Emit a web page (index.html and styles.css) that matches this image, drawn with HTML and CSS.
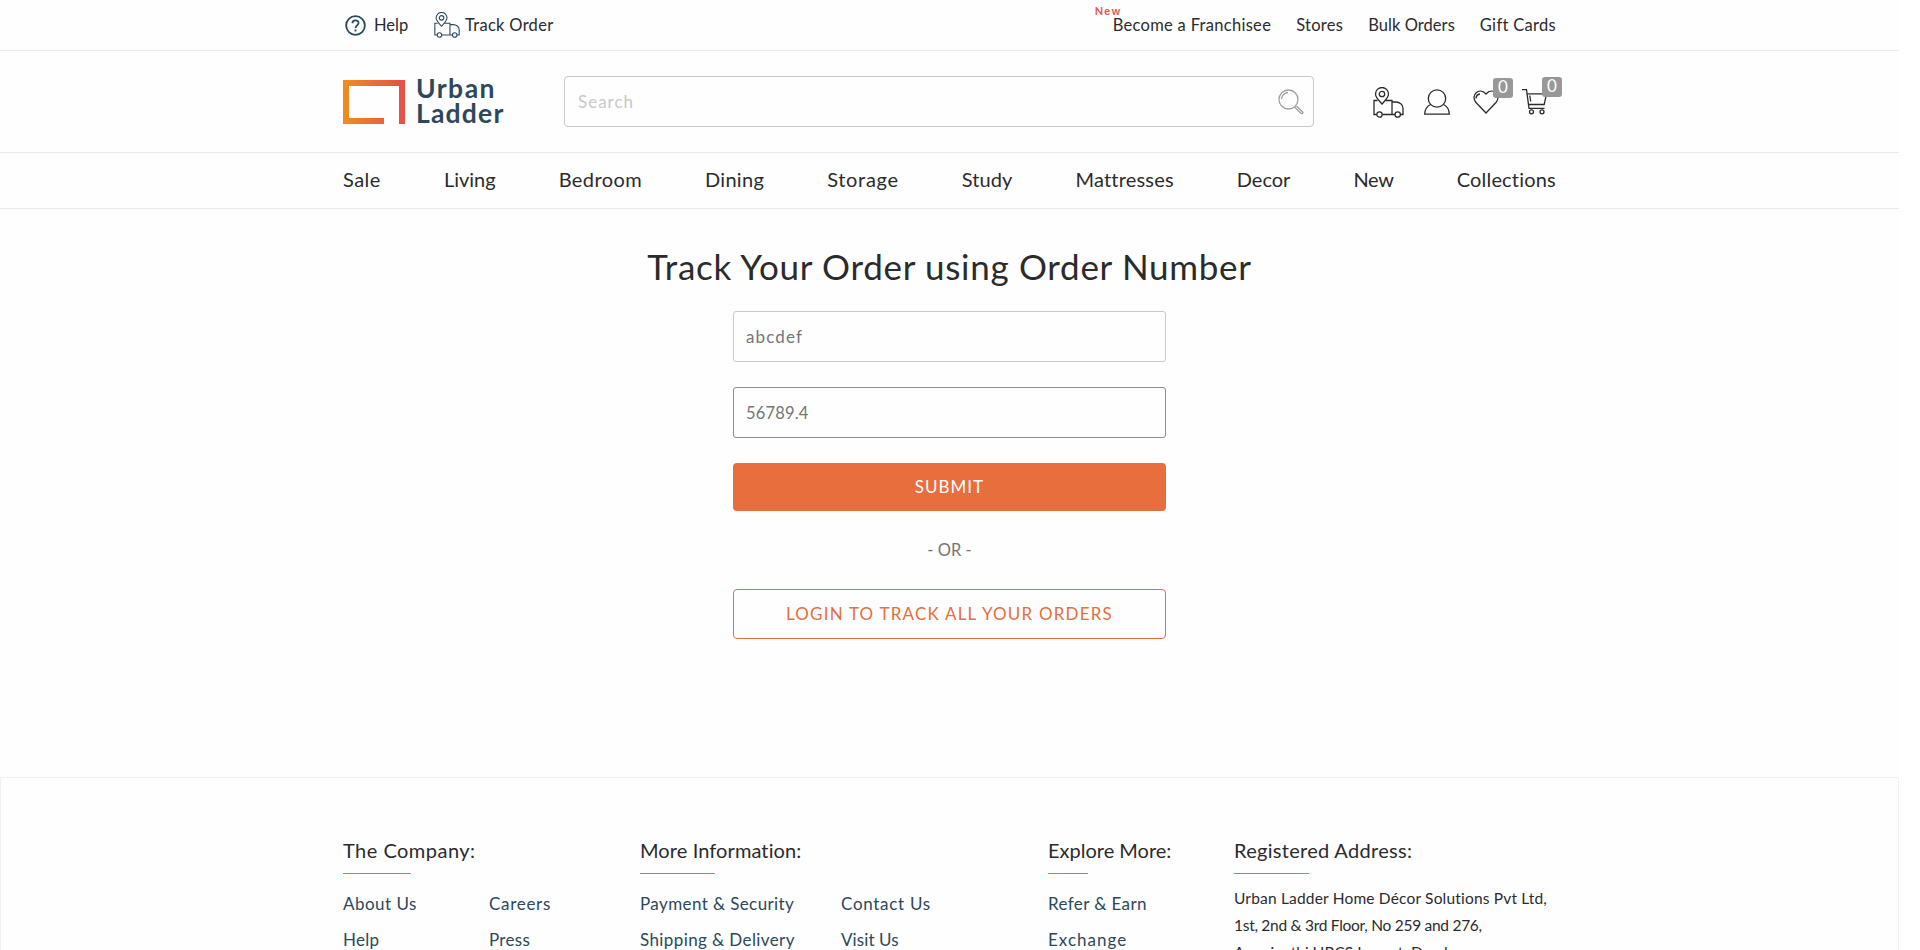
FILE: index.html
```html
<!DOCTYPE html>
<html lang="en">
<head>
<meta charset="utf-8">
<title>Track Order - Urban Ladder</title>
<link rel="stylesheet" href="styles.css">
</head>
<body>
<svg class="defs" width="0" height="0">
  <symbol id="truck" viewBox="0 0 31 31">
    <path d="M4.5 13.5H1V27.500H3.500M9.500 27.500H22M27.500 27.500H30V21C30 17.500 26.500 15 23 15H19M12.500 13.500H19V27.500"/>
    <path d="M9 17C6 13.500 2.500 10.500 2.500 7A6.500 6.500 0 0 1 15.500 7C15.500 10.500 12 13.500 9 17Z"/>
    <circle cx="9" cy="7" r="2.700"/><circle cx="6.500" cy="27.500" r="2.700"/><circle cx="24.700" cy="27.500" r="2.700"/>
  </symbol>
</svg>
<div class="page">
  <div class="topbar"><div class="wrap row">
    <a class="help"><svg class="q" viewBox="0 0 22 22"><circle cx="11" cy="11" r="9.800"/><path d="M7.800 8.700C7.800 4.700 14.200 4.700 14.200 8.500C14.200 11 11 10.800 11 13.500M11 15.300V17.200"/></svg><span>Help</span></a>
    <a class="track"><svg class="truck-s"><use href="#truck"/></svg><span class="s3">Track Order</span></a>
    <div class="links">
      <a class="fr"><span class="s3">Become a Franchisee</span><b class="new">New</b></a>
      <a class="s3">Stores</a><a class="s0">Bulk Orders</a><a class="s3">Gift Cards</a>
    </div>
  </div></div>
  <header class="head"><div class="wrap row">
    <div class="logo">
      <svg viewBox="0 0 62 44"><defs><linearGradient id="g" x1="0" x2="1"><stop offset=".08" stop-color="#ee8a1f"/><stop offset=".9" stop-color="#e85349"/></linearGradient></defs><path fill="url(#g)" d="M0 0H62V44H56V6H6V38H41V44H0Z"/></svg>
      <div class="name"><span class="urban">Urban</span><span class="ladder">Ladder</span></div>
    </div>
    <div class="search"><span>Search</span><svg viewBox="0 0 26 26"><circle cx="10.500" cy="10.500" r="9.500"/><path d="M3.500 10A7 7 0 0 1 10 3.500M16.500 18L23 24.500Q24.500 25 25 23.500L18.500 17"/></svg></div>
    <div class="icons">
      <svg class="i-truck"><use href="#truck"/></svg>
      <svg class="i-user" viewBox="0 0 26 26"><circle cx="13" cy="9.500" r="8.700"/><path d="M6.500 15.500C2.500 17.500 .8 21 .7 25.200H25.300C25.200 21 23.500 17.500 19.500 15.500"/></svg>
      <span class="ic"><svg class="i-heart" viewBox="0 0 26 24"><path d="M13 23L3 12.500C-3 5.500 6-3.500 13 4C20-3.500 29 5.500 23 12.500ZM3 8.500Q3.200 4.500 7 4"/></svg><i class="badge">0</i></span>
      <span class="ic"><svg class="i-cart" viewBox="0 0 26 26"><path d="M0 .7H4.500L7 19.300H22.500M5.300 4.800H24.500L22.200 15.500H6.500M7.800 6.500L8.700 12.500"/><circle cx="9.500" cy="22.800" r="2"/><circle cx="20" cy="22.800" r="2"/></svg><i class="badge">0</i></span>
    </div>
  </div></header>
  <nav class="nav"><div class="wrap row">
    <a class="s5">Sale</a><a>Living</a><a class="s4">Bedroom</a><a class="s3">Dining</a><a class="s7">Storage</a><a class="s1">Study</a><a class="s2">Mattresses</a><a>Decor</a><a class="tight">New</a><a class="s2">Collections</a>
  </div></nav>
  <main class="main">
    <h1>Track Your Order using Order Number</h1>
    <div class="form">
      <div class="field"><span class="wide">abcdef</span></div>
      <div class="field active"><span class="s2">56789.4</span></div>
      <div class="btn solid"><span>SUBMIT</span></div>
      <div class="or"><span>- OR -</span></div>
      <div class="btn line"><span class="login">LOGIN TO TRACK ALL YOUR ORDERS</span></div>
    </div>
  </main>
  <footer class="foot"><div class="wrap cols">
    <section><h2 class="s5">The Company:</h2><div class="rule r-a"></div><div class="lists a"><ul><li class="s5">About Us</li><li class="s3">Help</li></ul><ul><li class="s7">Careers</li><li class="s3">Press</li></ul></div></section>
    <section><h2 class="s1">More Information:</h2><div class="rule r-b"></div><div class="lists b"><ul><li class="s4">Payment &amp; Security</li><li class="s4">Shipping &amp; Delivery</li></ul><ul><li class="s7">Contact Us</li><li class="s1">Visit Us</li></ul></div></section>
    <section><h2>Explore More:</h2><div class="rule r-c"></div><div class="lists"><ul><li class="s4">Refer &amp; Earn</li><li class="s10">Exchange</li></ul></div></section>
    <section><h2 class="s3">Registered Address:</h2><div class="rule r-b"></div><div class="addr"><p class="s2">Urban Ladder Home Décor Solutions Pvt Ltd,</p><p class="tight">1st, 2nd &amp; 3rd Floor, No 259 and 276,</p><p>Amarjyothi HBCS Layout, Domlur,</p></div></section>
  </div></footer>
</div>
</body>
</html>
```
FILE: styles.css
```css
*{box-sizing:border-box}
html{height:100%;overflow:hidden}
body{margin:0;height:950px;overflow:hidden;background:#fff;font:16.500px/20px Lato,"Open Sans",sans-serif;color:#2b2b2c}
.defs{display:block}
.page{width:1899px;height:950px;overflow:hidden;background:#fefefe}
.wrap{width:1213px;margin:0 auto}
.row{display:flex;align-items:center;height:100%}
span,a{white-space:nowrap}
svg{fill:none;stroke:currentColor;stroke-width:1.300;display:block;flex:none}
/* tracking steps */
.s0{letter-spacing:.05px}
.s1{letter-spacing:.1px}
.s2{letter-spacing:.18px}
.s3{letter-spacing:.3px}
.s4{letter-spacing:.4px}
.s5{letter-spacing:.48px}
.s7{letter-spacing:.7px}
.s10{letter-spacing:1px}
.tight{letter-spacing:-.28px}
.topbar{height:51px;border-bottom:1px solid #e9e9ea}
.help,.track{display:flex;align-items:center}
.help{width:91px;padding-left:2px}
.q{width:21px;height:21px;stroke-width:1.900;color:#2c485a;margin-right:8px}
.truck-s{width:26px;height:26px;color:#2c485a;margin-right:5px}
.links{display:flex;gap:25px;margin-left:auto}
.fr{position:relative}
.new{position:absolute;left:-18px;top:-14px;font-size:11px;letter-spacing:1.400px;color:#e85349}
.head{height:102px;border-bottom:1px solid #e9e9ea}
.logo{display:flex;width:221px;height:44px;gap:11px;color:#2c485a}
.logo svg{width:62px;height:44px;stroke:none}
.name{display:flex;flex-direction:column;font-weight:700;font-size:26.500px;line-height:25px;margin-top:-4px}
.urban{letter-spacing:1.500px}
.ladder{letter-spacing:1.200px}
.search{width:750px;height:51px;border:1px solid #c9c9c9;border-radius:4px;display:flex;align-items:center;justify-content:space-between;padding:0 9px 0 13px;color:#c9c9c9;font-size:17px;letter-spacing:1px}
.search svg{width:26px;height:26px;color:#a0a0a0}
.icons{display:flex;align-items:center;margin-left:58px}
.i-truck{width:31px;height:31px;margin:1px 20px 0 1px}
.i-user{width:26px;height:26px;margin-right:23px}
.ic{position:relative;width:49px}
.i-heart{width:26px;height:24px}
.i-cart{width:26px;height:26px}
.ic:last-child{width:26px}
.badge{position:absolute;left:20px;top:-12px;width:20px;height:20px;border-radius:3px;background:#989898;color:#fff;font:17px/18px Lato,sans-serif;text-align:center}
.nav{height:56px;border-bottom:1px solid #e9e9ea;font-size:20px;padding-bottom:3px}
.nav .row{justify-content:space-between}
.main{height:568px;padding-top:32px}
h1{margin:0;font-weight:400;font-size:35px;line-height:50px;text-align:center;letter-spacing:.7px}
.form{width:433px;margin:20px auto 0}
.field{height:51px;border:1px solid #c9c9c9;border-radius:3px;margin-bottom:25px;padding:0 12px;display:flex;align-items:center;color:#757575}
.field.active{border-color:#8e8e90}
.wide{font-size:17px;letter-spacing:1.100px}
.btn{display:flex;align-items:center;justify-content:center;border-radius:4px;letter-spacing:1px;font-size:17px}
.login{letter-spacing:1.200px}
.solid{height:48px;background:#e86e3d;color:#fff}
.or{height:78px;display:flex;align-items:center;justify-content:center;color:#757575}
.line{height:50px;border:1px solid #e86e3d;color:#e86e3d}
.foot{border:1px solid #f1f1f2;height:200px;padding-top:60px}
.cols{display:grid;grid-template-columns:297px 408px 186px 322px}
h2{margin:0;font-weight:400;font-size:20px;line-height:25px;white-space:nowrap}
.rule{height:1px;background:#e86e3d;margin-top:10px}
.r-a{width:68px}
.r-b{width:75px}
.r-c{width:40px}
.lists{display:grid;padding-top:12px;color:#2c485a;font-size:17px}
.a{grid-template-columns:146px auto}
.b{grid-template-columns:201px auto}
ul{list-style:none;margin:0;padding:0}
li{line-height:36px;white-space:nowrap}
.addr{padding-top:11px;font-size:15.500px}
.addr p{margin:0;line-height:27px;white-space:nowrap}
```
